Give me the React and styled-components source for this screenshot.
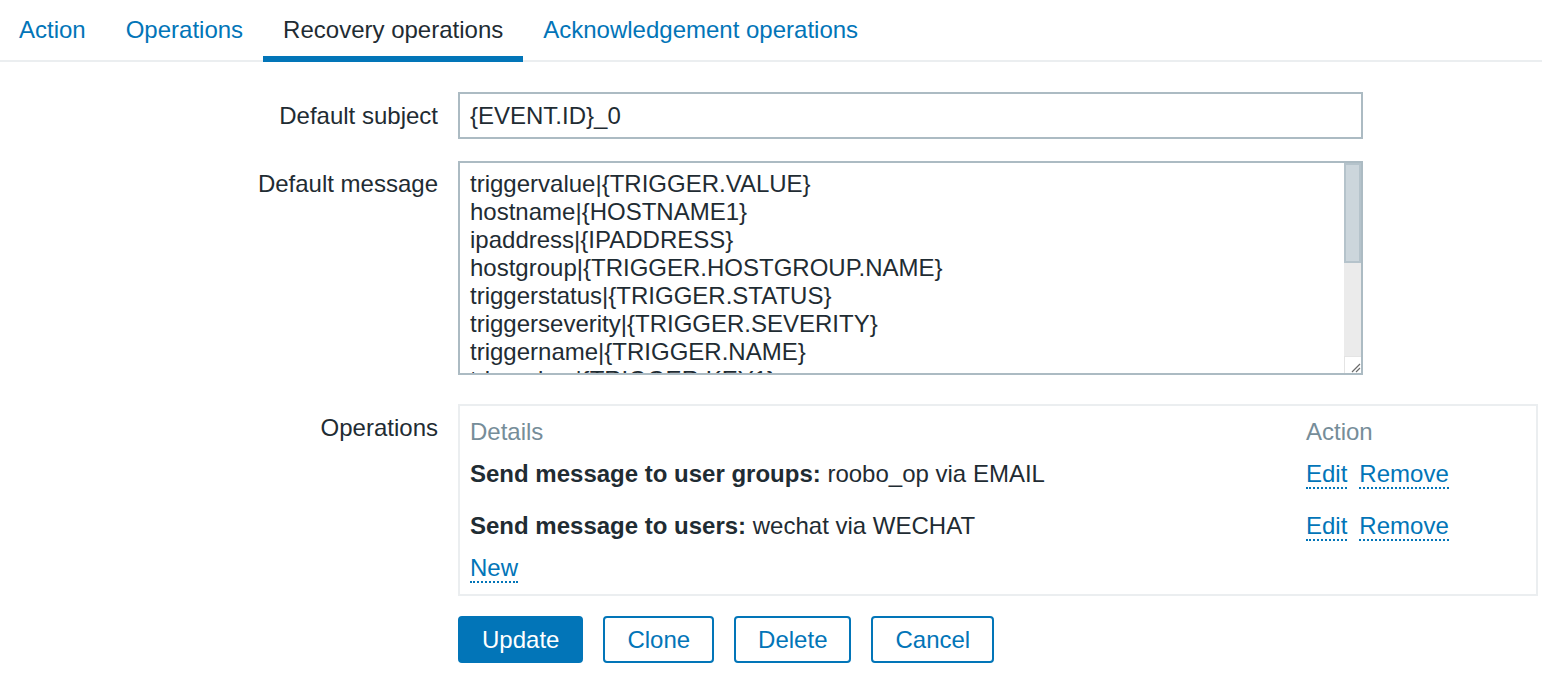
import React from "react";
import styled, { createGlobalStyle } from "styled-components";

const Global = createGlobalStyle`
  html, body { margin: 0; padding: 0; background: #ffffff; }
  body {
    font-family: "Liberation Sans", Arial, Helvetica, sans-serif;
    font-size: 24px;
    color: #1f2c33;
  }
  * { box-sizing: border-box; }
`;

const Page = styled.div`
  width: 1542px;
  height: 694px;
  overflow: hidden;
`;

const TabBar = styled.div`
  display: flex;
  height: 62px;
  border-bottom: 2px solid #ebeef0;
`;

const TabList = styled.div`
  display: flex;
  margin-left: -1px;
  height: 62px;
`;

const Tab = styled.div`
  padding: 16px 20px 12px;
  line-height: 28px;
  height: 62px;
  white-space: nowrap;
  color: ${(p) => (p.$active ? "#1f2c33" : "#0275b8")};
  border-bottom: 6px solid ${(p) => (p.$active ? "#0275b8" : "transparent")};
  cursor: pointer;
`;

const Form = styled.div`
  display: flex;
  flex-direction: column;
  padding-top: 30px;
`;

const Row = styled.div`
  display: grid;
  grid-template-columns: 438px 1fr;
  column-gap: 20px;
  margin-bottom: ${(p) => p.$mb}px;
  padding-right: 4px;
`;

const Label = styled.label`
  text-align: right;
  line-height: 28px;
  padding-top: ${(p) => p.$pt}px;
  white-space: nowrap;
`;

const Field = styled.div`
  display: flex;
  flex-direction: column;
  align-items: flex-start;
`;

const TextInput = styled.input`
  width: 905px;
  height: 47px;
  border: 2px solid #acbbc3;
  padding: 0 10px;
  font: inherit;
  color: #1f2c33;
  outline: none;
  background: #fff;
`;

const AreaWrap = styled.div`
  position: relative;
  width: 905px;
  height: 214px;
`;

const TextArea = styled.textarea`
  display: block;
  width: 905px;
  height: 214px;
  border: 2px solid #acbbc3;
  padding: 7px 30px 7px 10px;
  font: inherit;
  line-height: 28px;
  color: #1f2c33;
  outline: none;
  resize: none;
  white-space: pre;
  overflow: hidden;
  background: #fff;
`;

const ScrollBar = styled.div`
  position: absolute;
  top: 2px;
  right: 2px;
  bottom: 2px;
  width: 17px;
  display: flex;
  flex-direction: column;
  background: #ebebeb;
`;

const Thumb = styled.div`
  height: 100px;
  background: #ccd6dc;
  border: 2px solid #b5c3cb;
`;

const Track = styled.div`
  flex: 1;
`;

const Corner = styled.div`
  height: 17px;
  background: #ffffff;
  border-left: 1px solid #e4e4e4;
  border-top: 1px solid #e4e4e4;
  display: flex;
  align-items: flex-end;
  justify-content: flex-end;
`;

const OpsBox = styled.div`
  width: 1080px;
  border: 2px solid #ebeef0;
  padding: 12px 10px;
  display: flex;
  flex-direction: column;
`;

const OpsRow = styled.div`
  display: grid;
  grid-template-columns: 1fr 220px;
  line-height: 28px;
  height: 28px;
  margin-top: ${(p) => p.$mt || 0}px;
  color: ${(p) => (p.$head ? "#768d99" : "#1f2c33")};
  white-space: nowrap;
`;

const Strong = styled.b`
  font-weight: bold;
`;

const Actions = styled.div`
  line-height: 28px;
`;

const Link = styled.span`
  color: #0275b8;
  border-bottom: 2px dotted #0275b8;
  cursor: pointer;
  & + & {
    margin-left: 12px;
  }
`;

const NewLine = styled.div`
  line-height: 28px;
  height: 28px;
  margin-top: 14px;
`;

const Buttons = styled.div`
  display: flex;
  gap: 20px;
`;

const Button = styled.button`
  height: 47px;
  padding: 0 22px;
  font: inherit;
  border-radius: 4px;
  border: 2px solid #0275b8;
  background: ${(p) => (p.$primary ? "#0275b8" : "#ffffff")};
  color: ${(p) => (p.$primary ? "#ffffff" : "#0275b8")};
  cursor: pointer;
`;

const message = [
  "triggervalue|{TRIGGER.VALUE}",
  "hostname|{HOSTNAME1}",
  "ipaddress|{IPADDRESS}",
  "hostgroup|{TRIGGER.HOSTGROUP.NAME}",
  "triggerstatus|{TRIGGER.STATUS}",
  "triggerseverity|{TRIGGER.SEVERITY}",
  "triggername|{TRIGGER.NAME}",
  "triggerkey|{TRIGGER.KEY1}",
  "triggerurl|{TRIGGER.URL}",
  "itemvalue|{ITEM.VALUE1}",
  "itemname|{ITEM.NAME1}",
  "eventid|{EVENT.ID}",
  "eventtime|{EVENT.TIME}",
  "eventdate|{EVENT.DATE}",
].join("\n");

export default function App() {
  return (
    <Page>
      <Global />
      <TabBar>
        <TabList>
          <Tab>Action</Tab>
          <Tab>Operations</Tab>
          <Tab $active>Recovery operations</Tab>
          <Tab>Acknowledgement operations</Tab>
        </TabList>
      </TabBar>
      <Form>
        <Row $mb={22}>
          <Label $pt={10}>Default subject</Label>
          <Field>
            <TextInput defaultValue="{EVENT.ID}_0" />
          </Field>
        </Row>
        <Row $mb={29}>
          <Label $pt={9}>Default message</Label>
          <Field>
            <AreaWrap>
              <TextArea defaultValue={message} spellCheck={false} />
              <ScrollBar>
                <Thumb />
                <Track />
                <Corner>
                  <svg width="12" height="12" viewBox="0 0 12 12">
                    <path d="M11 3 L3 11 M11 7 L7 11" stroke="#6b6b6b" strokeWidth="1.2" fill="none" />
                  </svg>
                </Corner>
              </ScrollBar>
            </AreaWrap>
          </Field>
        </Row>
        <Row $mb={20}>
          <Label $pt={10}>Operations</Label>
          <Field>
            <OpsBox>
              <OpsRow $head>
                <span>Details</span>
                <span>Action</span>
              </OpsRow>
              <OpsRow $mt={14}>
                <span>
                  <Strong>Send message to user groups:</Strong> roobo_op via EMAIL
                </span>
                <Actions>
                  <Link>Edit</Link>
                  <Link>Remove</Link>
                </Actions>
              </OpsRow>
              <OpsRow $mt={24}>
                <span>
                  <Strong>Send message to users:</Strong> wechat via WECHAT
                </span>
                <Actions>
                  <Link>Edit</Link>
                  <Link>Remove</Link>
                </Actions>
              </OpsRow>
              <NewLine>
                <Link>New</Link>
              </NewLine>
            </OpsBox>
          </Field>
        </Row>
        <Row $mb={0}>
          <span />
          <Buttons>
            <Button $primary>Update</Button>
            <Button>Clone</Button>
            <Button>Delete</Button>
            <Button>Cancel</Button>
          </Buttons>
        </Row>
      </Form>
    </Page>
  );
}
